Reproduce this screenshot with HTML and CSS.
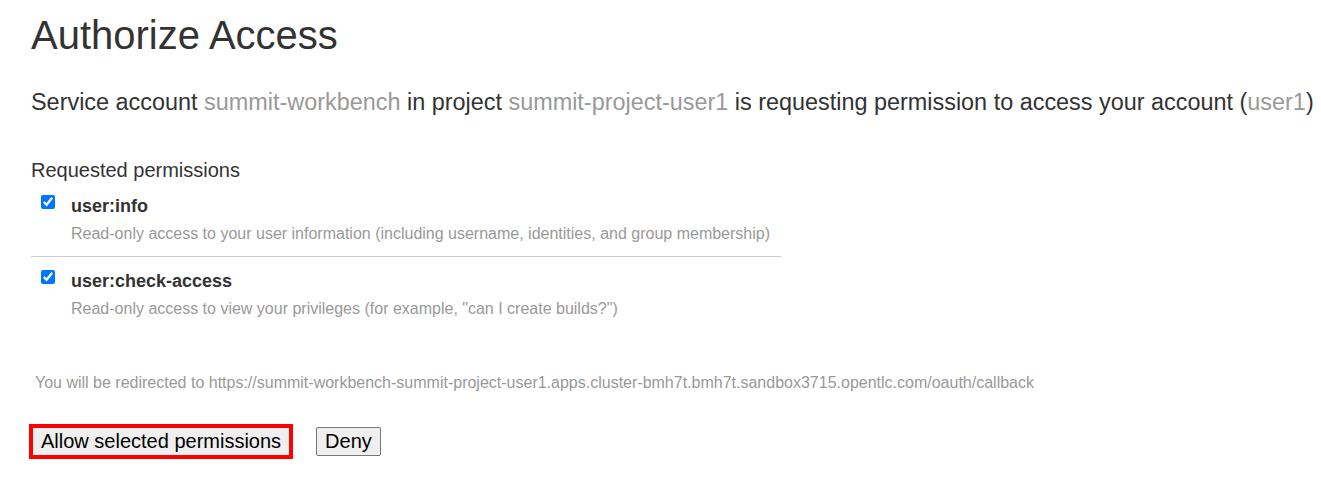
FILE: index.html
```html
<!DOCTYPE html>
<html lang="en">
<head>
<meta charset="utf-8">
<title>Authorize Access</title>
<link rel="stylesheet" href="styles.css">
</head>
<body>
<main class="page">
  <h1 class="title">Authorize Access</h1>
  <p class="intro">Service account <span class="muted">summit-workbench</span> in project <span class="muted">summit-project-user1</span> is requesting permission to access your account (<span class="muted">user1</span>)</p>

  <form class="grant-form">
    <h2 class="section-title">Requested permissions</h2>
    <ul class="scopes">
      <li class="scope">
        <input class="scope-check" type="checkbox" checked>
        <div class="scope-body">
          <div class="scope-name">user:info</div>
          <div class="scope-desc">Read-only access to your user information (including username, identities, and group membership)</div>
        </div>
      </li>
      <li class="scope">
        <input class="scope-check" type="checkbox" checked>
        <div class="scope-body">
          <div class="scope-name">user:check-access</div>
          <div class="scope-desc">Read-only access to view your privileges (for example, "can I create builds?")</div>
        </div>
      </li>
    </ul>

    <p class="redirect">You will be redirected to https://summit-workbench-summit-project-user1.apps.cluster-bmh7t.bmh7t.sandbox3715.opentlc.com/oauth/callback</p>

    <div class="actions">
      <button type="button" class="btn btn-highlight">Allow selected permissions</button>
      <button type="button" class="btn">Deny</button>
    </div>
  </form>
</main>
</body>
</html>
```

FILE: styles.css
```css
html, body {
  margin: 0;
  padding: 0;
  background: #ffffff;
}

body {
  font-family: "Liberation Sans", Arial, sans-serif;
  color: #333333;
}

.page {
  padding: 0 31px;
}

.title {
  margin: 0;
  padding-top: 12px;
  font-size: 40px;
  font-weight: normal;
  line-height: 46px;
  color: #333333;
}

.intro {
  margin: 30px 0 0;
  font-size: 23.42px;
  line-height: 28px;
  color: #333333;
  white-space: nowrap;
}

.muted {
  color: #999999;
}

.grant-form {
  margin: 0;
}

.section-title {
  margin: 42px 0 0;
  font-size: 20px;
  font-weight: normal;
  line-height: 24px;
  color: #333333;
}

.scopes {
  list-style: none;
  margin: 0;
  padding: 0;
  width: 750px;
}

.scope {
  display: flex;
  align-items: flex-start;
  padding: 13px 0 12px;
}

.scope + .scope {
  border-top: 1px solid #cccccc;
  padding-top: 13px;
}

.scope-check {
  margin: 0 0 0 10px;
  width: 14px;
  height: 14px;
  flex: none;
}

.scope-body {
  margin-left: 16px;
}

.scope-name {
  font-size: 18px;
  font-weight: bold;
  line-height: 22px;
  color: #333333;
}

.scope-desc {
  margin-top: 7px;
  font-size: 16px;
  line-height: 20px;
  color: #999999;
}

.redirect {
  margin: 42px 0 0 4px;
  font-size: 16px;
  line-height: 20px;
  color: #999999;
}

.actions {
  display: flex;
  align-items: center;
  gap: 23px;
  margin: 31px 0 0 -2px;
}

.btn {
  font-family: "Liberation Sans", Arial, sans-serif;
  font-size: 20px;
  padding: 2px 8px;
  color: #000000;
  background: #efefef;
  border: 1px solid #767676;
  border-radius: 2px;
  line-height: 23px;
}

.btn-highlight {
  border: 4px solid #ff0000;
  border-radius: 0;
}
```
